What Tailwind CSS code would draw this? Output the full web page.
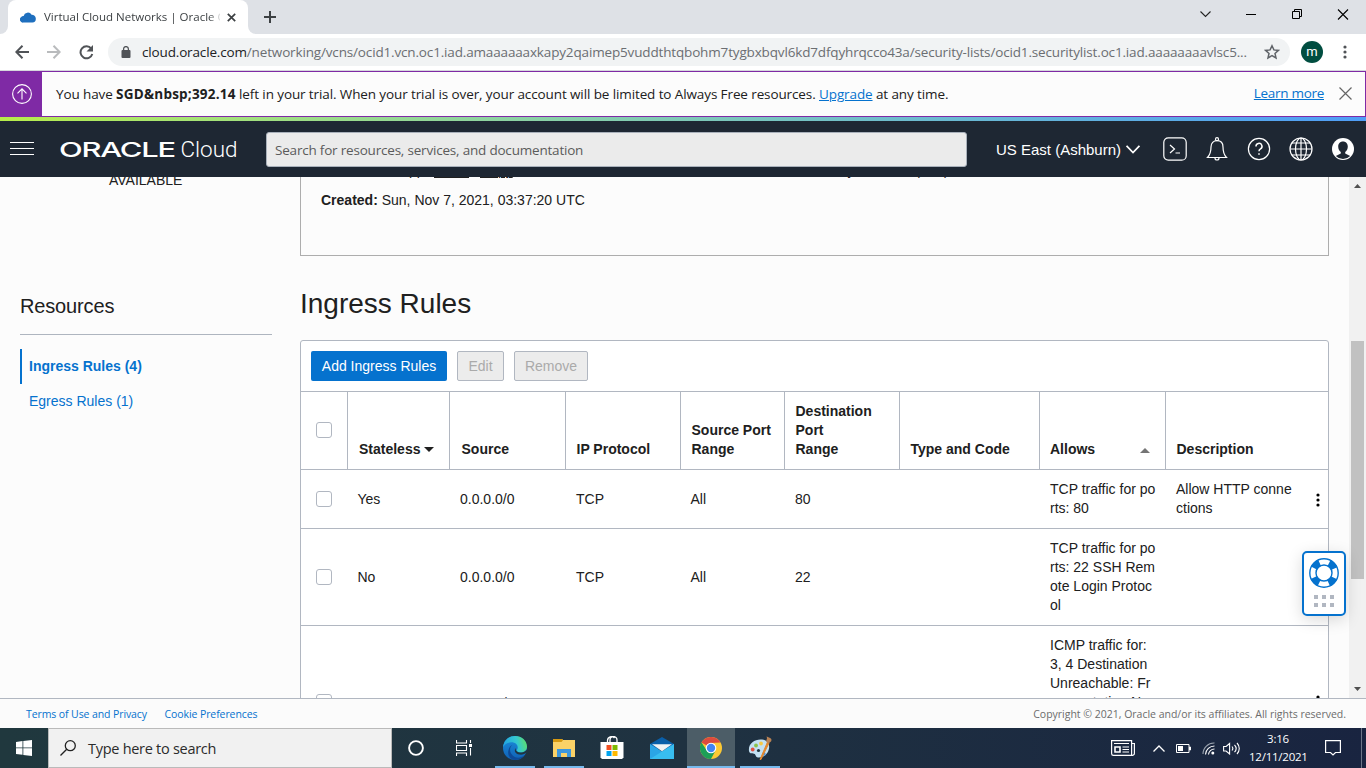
<!DOCTYPE html>
<html lang="en">
<head>
<meta charset="utf-8">
<title>Virtual Cloud Networks | Oracle Cloud</title>
<script src="https://cdn.jsdelivr.net/npm/@tailwindcss/browser@4"></script>
</head>
<body class="w-[1366px] h-[768px] overflow-hidden flex flex-col bg-[#fcfcfc] text-[#202020] font-['Open_Sans','Noto_Sans',sans-serif] whitespace-nowrap">

<!-- tab strip -->
<div class="h-[34px] shrink-0 bg-[#dee1e6] flex items-stretch">
  <div class="w-2 flex bg-white"><div class="w-2 bg-[#dee1e6] rounded-br-lg"></div></div>
  <div class="w-[240px] bg-white rounded-t-lg flex items-center pl-3 pr-[10px]">
    <svg class="w-4 h-[11px] shrink-0" viewBox="0 0 16 11"><path d="M3.3 10.6A3 3 0 0 1 1 5.3 3 3 0 0 1 3.6 4 4.4 4.4 0 0 1 11.6 2.7 4 4 0 0 1 15.8 6.6 3.8 3.8 0 0 1 12.5 10.6Z" fill="#1e6fbe"/></svg>
    <div class="ml-2 w-[176px] overflow-hidden text-[11.5px] leading-4 text-[#3c4043] [mask-image:linear-gradient(90deg,#000_165px,transparent_178px)]">Virtual Cloud Networks | Oracle Clo</div>
    <svg class="w-[9px] h-[9px] ml-[7px] shrink-0" viewBox="0 0 9 9" stroke="#3c4043" stroke-width="1.7"><path d="M.8.8l7.4 7.4M8.2.8L.8 8.2"/></svg>
  </div>
  <div class="w-2 flex bg-white"><div class="w-2 bg-[#dee1e6] rounded-bl-lg"></div></div>
  <svg class="w-3 h-3 ml-2 mt-[11px]" viewBox="0 0 12 12" stroke="#3c4043" stroke-width="2"><path d="M6 0v12M0 6h12"/></svg>
  <div class="ml-auto flex items-start pt-[9px] pr-[18px]">
    <svg class="w-[11px] h-[11px] mr-[35px]" viewBox="0 0 11 11" fill="none" stroke="#222" stroke-width="1.1"><path d="M.5 2.5l5 5 5-5"/></svg>
    <svg class="w-[10px] h-[11px] mr-9" viewBox="0 0 10 11" fill="none" stroke="#000"><path d="M0 5.5h10"/></svg>
    <svg class="w-[10px] h-[11px] mr-9" viewBox="0 0 10 11" fill="none" stroke="#000"><path d="M.5 2.5h7v7h-7zM2.5 2.5v-2h7v7h-2"/></svg>
    <svg class="w-[10px] h-[11px] overflow-visible" viewBox="0 0 10 11" fill="none" stroke="#000" stroke-width="1.1"><path d="M0 .5l10 10M10 .5l-10 10"/></svg>
  </div>
</div>

<!-- address bar -->
<div class="h-[37px] shrink-0 bg-white border-b border-[#d5d8dc] flex items-center">
  <svg class="w-[14px] h-[14px] ml-[15px] shrink-0" viewBox="0 0 14 14" fill="none" stroke="#505357" stroke-width="2"><path d="M14 7H1.5M7.5.8L1.3 7l6.2 6.2"/></svg>
  <svg class="w-[14px] h-[14px] ml-[18px] shrink-0" viewBox="0 0 14 14" fill="none" stroke="#b9bbbd" stroke-width="2"><path d="M0 7h12.5M6.5.8L12.7 7l-6.2 6.2"/></svg>
  <svg class="w-[15px] h-[15px] ml-[18px] shrink-0" viewBox="0 0 15 15"><path d="M12.3 3.6A6 6 0 1 0 13.3 9" fill="none" stroke="#505357" stroke-width="2"/><path d="M14 0v6.5H7.5z" fill="#505357"/></svg>
  <div class="ml-[14px] w-[1182px] h-7 shrink-0 rounded-full bg-[#f1f3f4] flex items-center pl-[13px] pr-[10px]">
    <svg class="w-[10px] h-3 mr-[11px] shrink-0" viewBox="0 0 10 12"><rect x=".5" y="4" width="9" height="8" rx="1" fill="#505357"/><path d="M2.6 4.5V3a2.4 2.4 0 0 1 4.8 0v1.5" fill="none" stroke="#505357" stroke-width="1.3"/></svg>
    <div class="text-[13.5px] tracking-[-0.155px] leading-5 text-[#6b6e72]"><span class="text-[#202124]">cloud.oracle.com</span>/networking/vcns/ocid1.vcn.oc1.iad.amaaaaaaxkapy2qaimep5vuddthtqbohm7tygbxbqvl6kd7dfqyhrqcco43a/security-lists/ocid1.securitylist.oc1.iad.aaaaaaaavlsc5...</div>
    <svg class="w-4 h-4 ml-auto shrink-0" viewBox="0 0 16 16" fill="none" stroke="#5f6368" stroke-width="1.5"><path d="M8 1.8l1.9 4.1 4.5.5-3.4 3 1 4.5L8 11.6l-4 2.3 1-4.5-3.4-3 4.5-.5z"/></svg>
  </div>
  <div class="ml-[11px] w-[22px] h-[22px] shrink-0 rounded-full bg-[#004d40] text-white text-[13px] font-['Roboto',sans-serif] leading-[21px] text-center">m</div>
  <svg class="w-1 h-[14px] ml-[19.5px] shrink-0" viewBox="0 0 4 14" fill="#505357"><circle cx="2" cy="2" r="1.6"/><circle cx="2" cy="7" r="1.6"/><circle cx="2" cy="12" r="1.6"/></svg>
</div>

<!-- trial banner -->
<div class="h-[46px] shrink-0 border border-[#7f2aa5] bg-[#fcfcfc] flex items-center">
  <div class="w-[41px] h-full bg-[#7f2aa5] flex items-center pl-[11px]">
    <svg class="w-5 h-5" viewBox="0 0 20 20" fill="none" stroke="#fff" stroke-width="1.1"><circle cx="10" cy="10" r="9.4"/><path d="M10 15.5V5M5.5 9.3L10 4.8l4.5 4.5"/></svg>
  </div>
  <div class="ml-[14px] text-[13.5px] tracking-[-0.11px] leading-5">You have <b class="tracking-[0.22px]">SGD&amp;nbsp;392.14</b> left in your trial. When your trial is over, your account will be limited to Always Free resources. <a class="text-[#0572ce] underline">Upgrade</a> at any time.</div>
  <a class="ml-auto mr-[15px] text-[13.5px] tracking-[-0.3px] leading-5 text-[#0572ce] underline -mt-[2px]">Learn more</a>
  <svg class="w-[13px] h-[13px] mr-[13px] -mt-[2px]" viewBox="0 0 13 13" stroke="#666" stroke-width="1.2"><path d="M.5.5l12 12M12.5.5l-12 12"/></svg>
</div>
<div class="h-1 shrink-0 bg-linear-to-r from-[#b6ec49] to-[#4f9df7]"></div>

<!-- console header -->
<div class="h-14 shrink-0 bg-[#1e2733] flex items-center text-white">
  <svg class="w-6 h-[14px] ml-[10px]" viewBox="0 0 24 14" stroke="#fff" stroke-width="1"><path d="M0 .5h24M0 6.5h24M0 12.5h24"/></svg>
  <svg class="w-[178px] h-6 ml-[26px]" viewBox="0 0 178 24" fill="#fff"><text x="-1" y="20" font-family="Inter" font-weight="500" font-size="20.5" letter-spacing="-0.8" textLength="116" lengthAdjust="spacingAndGlyphs">ORACLE</text><text x="120.5" y="20" font-family="Roboto" font-weight="300" font-size="22" textLength="57" lengthAdjust="spacingAndGlyphs">Cloud</text></svg>
  <div class="ml-7 w-[701px] h-[35px] rounded-[3px] bg-[#ebebeb] border border-[#a9b1bb] flex items-center pl-2 pt-[2px] text-[13.5px] tracking-[-0.2px] text-[#5b5b5b]">Search for resources, services, and documentation</div>
  <div class="ml-[29px] w-[126px] text-[15px] font-['Liberation_Sans',sans-serif] pt-[2px]">US East (Ashburn)</div>
  <svg class="w-[14px] h-[9px] ml-[4px]" viewBox="0 0 14 9" fill="none" stroke="#fff" stroke-width="1.7"><path d="M.6.8L7 7.5 13.4.8"/></svg>
  <svg class="w-6 h-6 ml-[23px]" viewBox="0 0 24 24" fill="none" stroke="#fff" stroke-width="1.2"><rect x=".8" y=".8" width="22.4" height="22.4" rx="4.5"/><path d="M7 8l4.5 4L7 16M12.5 16H17"/></svg>
  <svg class="w-6 h-6 ml-[18px]" viewBox="0 0 24 24" fill="none" stroke="#fff" stroke-width="1.2"><circle cx="12" cy="2.2" r="1.5"/><path d="M2.5 20.5C4.8 18 6 15.5 6 10c0-4 2.5-6.3 6-6.3S18 6 18 10c0 5.5 1.2 8 3.5 10.5zM10 21a2 2 0 0 0 4 0"/></svg>
  <svg class="w-6 h-6 ml-[18px]" viewBox="0 0 24 24" fill="none" stroke="#fff" stroke-width="1.2"><circle cx="12" cy="12" r="10.6"/><path stroke-width="1.5" d="M9 9.5a3 2.9 0 1 1 4.5 2.3c-1 .6-1.5 1-1.5 2.4M12 16.2v1.6"/></svg>
  <svg class="w-6 h-6 ml-[18px]" viewBox="0 0 24 24" fill="none" stroke="#fff" stroke-width="1.2"><circle cx="12" cy="12" r="11"/><ellipse cx="12" cy="12" rx="5.5" ry="11"/><path d="M12 1v22M1 12h22M3 6h18M3 18h18"/></svg>
  <svg class="w-6 h-6 ml-[18px]" viewBox="0 0 24 24"><circle cx="12" cy="12" r="11" fill="#fff"/><path d="M12 4.5c3 0 4.8 2.2 4.8 5 0 2.5-1 4.4-2.6 5.6v1.4l5 2.5A10 10 0 0 1 12 22a10 10 0 0 1-7.2-3l5-2.5v-1.4C8.2 13.9 7.2 12 7.2 9.5c0-2.8 1.8-5 4.8-5z" fill="#1e2733"/></svg>
</div>

<!-- page -->
<div class="h-[521px] shrink-0 overflow-hidden flex font-['Liberation_Sans',sans-serif] text-[14px] leading-[19px] relative">
  <div class="w-[300px] shrink-0 px-5">
    <div class="mt-[-6px] ml-[89px] h-[19px]">AVAILABLE</div>
    <div class="mt-[102px] h-7 text-[20px] tracking-[-0.15px] leading-7">Resources</div>
    <div class="mt-[14px] w-[252px] h-px bg-[#aeb5bf]"></div>
    <div class="mt-[14px] h-[35px] border-l-2 border-[#0572ce] pl-[7px] leading-[34px] font-bold text-[#0572ce]">Ingress Rules (4)</div>
    <div class="h-[35px] pl-[9px] leading-[34px] text-[#0572ce]">Egress Rules (1)</div>
  </div>
  <div class="w-[1049px] shrink-0">
    <div class="w-[1029px] h-[79px] overflow-hidden border border-t-0 border-[#adadad] px-5">
      <div class="mt-[-15px] h-[19px] flex leading-[17px]"><div class="w-[113px]"><b>OCID:</b> ...uhwxpp</div><div class="w-[46px]"><span class="underline decoration-1 underline-offset-2">Show</span></div><div class="w-[320px]"><span class="underline decoration-1 underline-offset-2">Copy</span></div><div><b>&nbsp;</b>Security: network (root),</div></div>
      <div class="mt-[10px]"><b>Created:</b> Sun, Nov 7, 2021, 03:37:20 UTC</div>
    </div>
    <div class="mt-[30px] h-9 text-[28px] leading-9">Ingress Rules</div>
    <div class="mt-[18px] w-[1029px] border border-[#b1b7c1] bg-white rounded-t-[3px]">
      <div class="h-[51px] border-b border-[#b1b7c1] flex items-center gap-[10px] pl-[10px]">
        <div class="h-[30px] w-[136px] rounded-[2px] bg-[#0572ce] text-white text-center leading-[30px]">Add Ingress Rules</div>
        <div class="h-[30px] w-[47px] rounded-[2px] bg-[#ececec] border border-[#b1b7c1] text-[#aaa] text-center leading-7">Edit</div>
        <div class="h-[30px] w-[74px] rounded-[2px] bg-[#ececec] border border-[#b1b7c1] text-[#aaa] text-center leading-7">Remove</div>
      </div>
      <div class="h-[78px] border-b border-[#b1b7c1] grid grid-cols-[47px_102px_116px_115px_104px_115px_140px_126px_162px] font-bold">
        <div class="border-r border-[#b1b7c1] pl-[15px] pt-[30px]"><div class="w-4 h-4 rounded-[3px] border border-[#b1b7c1]"></div></div>
        <div class="border-r border-[#b1b7c1] pl-[11px] pb-[10px] flex items-end">Stateless<svg class="w-[10px] h-[5px] ml-1 mb-[7px]" viewBox="0 0 10 5"><path d="M0 0h10L5 5z" fill="#202020"/></svg></div>
        <div class="border-r border-[#b1b7c1] pl-[11.5px] pb-[10px] flex items-end">Source</div>
        <div class="border-r border-[#b1b7c1] pl-[10.5px] pb-[10px] flex items-end">IP Protocol</div>
        <div class="border-r border-[#b1b7c1] pl-[10.5px] pb-[10px] flex items-end"><span>Source Port<br>Range</span></div>
        <div class="border-r border-[#b1b7c1] pl-[10.5px] pb-[10px] flex items-end"><span>Destination<br>Port<br>Range</span></div>
        <div class="border-r border-[#b1b7c1] pl-[10.5px] pb-[10px] flex items-end">Type and Code</div>
        <div class="border-r border-[#b1b7c1] pl-[10px] pr-[15px] pb-[10px] flex items-end justify-between">Allows<svg class="w-[10px] h-[5px] mb-[6px]" viewBox="0 0 10 5"><path d="M0 5h10L5 0z" fill="#757575"/></svg></div>
        <div class="pl-[10.5px] pb-[10px] flex items-end">Description</div>
      </div>
      <div class="h-[59px] border-b border-[#b1b7c1] grid items-center grid-cols-[47px_102px_116px_115px_104px_115px_140px_126px_162px]">
        <div class="pl-[15px]"><div class="w-4 h-4 rounded-[3px] border border-[#b1b7c1]"></div></div>
        <div class="pl-[9.5px]">Yes</div><div class="pl-[10px]">0.0.0.0/0</div><div class="pl-[10px]">TCP</div><div class="pl-[9.5px]">All</div><div class="pl-[10px]">80</div><div></div>
        <div class="pl-[10px]">TCP traffic for po<br>rts: 80</div>
        <div class="pl-[10px] pr-[8px] flex items-center justify-between"><span>Allow HTTP conne<br>ctions</span><svg class="w-1 h-[14px] mt-px" viewBox="0 0 4 14"><circle cx="2" cy="2" r="1.6"/><circle cx="2" cy="7" r="1.6"/><circle cx="2" cy="12" r="1.6"/></svg></div>
      </div>
      <div class="h-[97px] border-b border-[#b1b7c1] grid items-center grid-cols-[47px_102px_116px_115px_104px_115px_140px_126px_162px]">
        <div class="pl-[15px]"><div class="w-4 h-4 rounded-[3px] border border-[#b1b7c1]"></div></div>
        <div class="pl-[9.5px]">No</div><div class="pl-[10px]">0.0.0.0/0</div><div class="pl-[10px]">TCP</div><div class="pl-[9.5px]">All</div><div class="pl-[10px]">22</div><div></div>
        <div class="pl-[10px]">TCP traffic for po<br>rts: 22 SSH Rem<br>ote Login Protoc<br>ol</div>
      </div>
      <div class="h-[152px] grid items-center grid-cols-[47px_102px_116px_115px_104px_115px_140px_126px_162px]">
        <div class="pl-[15px]"><div class="w-4 h-4 rounded-[3px] border border-[#b1b7c1]"></div></div>
        <div class="pl-[9.5px] pt-[2px]">No</div><div class="pl-[10px] pt-[2px]">0.0.0.0/0</div><div class="pl-[10px] pt-[2px]">ICMP</div><div></div><div></div><div class="pl-[10px] pt-[2px]">3, 4</div>
        <div class="pl-[10px]">ICMP traffic for:<br>3, 4 Destination<br>Unreachable: Fr<br>agmentation Ne<br>eded and Don't F<br>ragment was Se<br>t</div>
        <div class="pr-[8px] flex justify-end"><svg class="w-1 h-[14px]" viewBox="0 0 4 14"><circle cx="2" cy="2" r="1.6"/><circle cx="2" cy="7" r="1.6"/><circle cx="2" cy="12" r="1.6"/></svg></div>
      </div>
    </div>
  </div>
  <!-- scrollbar -->
  <div class="w-[17px] bg-[#f1f1f1] flex flex-col items-center">
    <svg class="w-[7px] h-1 mt-[7px]" viewBox="0 0 7 4"><path d="M0 4h7L3.5 0z" fill="#505050"/></svg>
    <div class="w-[13px] h-[238px] bg-[#c1c1c1] mt-[153px]"></div>
    <svg class="w-[7px] h-1 mt-auto mb-[7px]" viewBox="0 0 7 4"><path d="M0 0h7L3.5 4z" fill="#505050"/></svg>
  </div>
  <!-- floating help widget -->
  <div class="absolute left-[1302px] top-[374px] w-11 h-[65px] rounded-[5px] border-2 border-[#0572ce] bg-white shadow-[0_4px_16px_rgba(0,0,0,0.15)] flex flex-col items-center pt-[5px]">
    <svg class="w-[30px] h-[30px]" viewBox="0 0 30 30"><circle cx="15" cy="15" r="11" fill="none" stroke="#0572ce" stroke-width="7" stroke-dasharray="7.6 9.679" stroke-dashoffset="-4.84"/><g fill="none" stroke="#0572ce" stroke-width="1.4"><circle cx="15" cy="15" r="14.2"/><circle cx="15" cy="15" r="8"/></g></svg>
    <div class="mt-[7px] grid grid-cols-3 gap-1"><i class="w-1 h-1 bg-[#b1b7c1]"></i><i class="w-1 h-1 bg-[#b1b7c1]"></i><i class="w-1 h-1 bg-[#b1b7c1]"></i><i class="w-1 h-1 bg-[#b1b7c1]"></i><i class="w-1 h-1 bg-[#b1b7c1]"></i><i class="w-1 h-1 bg-[#b1b7c1]"></i></div>
  </div>
</div>

<!-- page footer -->
<div class="h-[30px] shrink-0 border-t border-[#b1b7c1] bg-[#fbfbfb] flex items-center pl-[26px] pr-5 pt-[2px] text-[10.5px]">
  <a class="text-[#0572ce] w-[138.5px] tracking-[-0.1px]">Terms of Use and Privacy</a>
  <a class="text-[#0572ce] tracking-[-0.09px]">Cookie Preferences</a>
  <div class="ml-auto text-[#6b6b6b] tracking-[-0.01px]">Copyright © 2021, Oracle and/or its affiliates. All rights reserved.</div>
</div>

<!-- taskbar -->
<div class="h-10 shrink-0 bg-linear-to-r from-[#20383e] via-[#1f3241] to-[#192440] flex items-stretch text-white">
  <div class="w-12 flex items-center pl-4 pb-[1px]"><svg class="w-4 h-4" viewBox="0 0 16 16" fill="#fff"><path d="M0 2l6.5-.9v6.5H0zM7.3 1L16 0v7.6H7.3zM0 8.3h6.5v6.5L0 14zM7.3 8.3H16V16l-8.7-1z"/></svg></div>
  <div class="w-[344px] bg-[#f1f1f1] border border-[#bababa] flex items-center pl-[11px] text-[#2b2b2b] text-[14.5px] tracking-[-0.28px]">
    <svg class="w-4 h-4 mr-[12px] -mt-px" viewBox="0 0 16 16" fill="none" stroke="#222" stroke-width="1.3"><circle cx="10.3" cy="5.7" r="5"/><path d="M6.7 9.3L.5 15.5"/></svg><span class="pt-[2px]">Type here to search</span>
  </div>
  <div class="w-12 flex items-center justify-center"><svg class="w-4 h-4" viewBox="0 0 16 16" fill="none" stroke="#fff" stroke-width="1.9"><circle cx="8" cy="8" r="6.9"/></svg></div>
  <div class="w-[47px] flex items-center justify-center pl-px"><svg class="w-[17px] h-4" viewBox="0 0 17 16" fill="none" stroke="#fff" stroke-width="1.1"><path d="M.5 0v3h10V0M.5 5.5h10v5H.5zM.5 16v-3h10v3M14.5 0v3M14.5 8v7.5"/><path d="M13 4h3v3h-3z" fill="#fff" stroke="none"/></svg></div>
  <div class="w-[55px] flex flex-col items-center">
    <svg class="w-6 h-6 mt-2" viewBox="0 0 24 24"><defs><linearGradient id="ea" x1="0" x2="1" y1=".3" y2=".1"><stop stop-color="#22a5e0"/><stop offset=".55" stop-color="#35c8d0"/><stop offset="1" stop-color="#62e05c"/></linearGradient><linearGradient id="eb" x1="0" x2="0" y2="1"><stop stop-color="#1b8fdc"/><stop offset="1" stop-color="#1061b5"/></linearGradient></defs><circle cx="12" cy="12" r="12" fill="url(#eb)"/><path d="M.1 11C.8 4.5 5.8 0 12 0c6.8 0 12 4.8 12 10.5 0 3.5-2.7 6-6 6-2.7 0-4.3-.8-4.3-2 0-.8 1-1.3 1-3C14.7 8.5 12 6.3 8.5 6.3 4.5 6.3 1.5 8.3.1 11z" fill="url(#ea)"/><path d="M9.5 8.8c-3 2.3-3.6 7 .2 10.7 3 2.9 7.3 3 11.6.1-2 2.7-5 4.4-9 4.4C7 23.5 4.5 19 5.3 15 5.8 12 7.3 9.8 9.5 8.8z" fill="#0e4a97"/><path d="M24 16.3c-2.2 2-5 2.7-7.7 2.3-3.8-.5-5.6-3.6-3.7-6.6-.2 2.8 1.6 4.5 5.4 4.5 3 0 5-1.5 6-3z" fill="#203540"/></svg>
    <div class="mt-auto w-10 h-[2px] bg-[#76b9ed]"></div>
  </div>
  <div class="w-[43px] flex flex-col items-center">
    <svg class="w-[22px] h-[18px] mt-[11px]" viewBox="0 0 22 18"><path d="M0 0h9l1 1h12v17H0z" fill="#fbd267"/><path d="M0 0h9l1 1.2L8.5 3H0z" fill="#d79a12"/><path d="M4 10h14v8h-4v-4H8v4H4z" fill="#3d97dd"/></svg>
    <div class="mt-auto w-10 h-[2px] bg-[#76b9ed]"></div>
  </div>
  <div class="w-[54px] flex justify-center items-start">
    <svg class="w-6 h-[23px] mt-2" viewBox="0 0 24 23"><path d="M7.5 7V4.5a4 4 0 0 1 7-2.5M10 7V4a3 3 0 0 1 7 0v3" fill="none" stroke="#fff" stroke-width="1.3"/><path d="M.5 6h23v15.5l-1.5 1.5H2L.5 21.5z" fill="#fff"/><path d="M6.5 9h5v5h-5z" fill="#f25022"/><path d="M12.5 9h5v5h-5z" fill="#7fba00"/><path d="M6.5 15h5v5h-5z" fill="#00a4ef"/><path d="M12.5 15h5v5h-5z" fill="#ffb900"/></svg>
  </div>
  <div class="w-12 flex items-start pl-[11px]">
    <svg class="w-6 h-[22px] mt-[9px]" viewBox="0 0 24 22"><path d="M0 7l12-7 12 7v5H0z" fill="#0a5fa9"/><path d="M0 7l12 7.5L24 7v15H0z" fill="#2ba5e6"/><path d="M0 22L24 7v15z" fill="#38bdf0"/><path d="M2 7.3h20l-10 7z" fill="#f0f3f5"/></svg>
  </div>
  <div class="w-12 bg-[#4c5d67] flex flex-col items-center">
    <svg class="w-[22px] h-[22px] mt-[9px]" viewBox="0 0 22 22"><circle cx="11" cy="11" r="11" fill="#fcc934"/><path d="M11 11L1.47 5.5A11 11 0 0 1 20.53 5.5L11 6z" fill="#dd4b3e"/><path d="M1.47 5.5A11 11 0 0 0 11 22l4.5-8.5L6.5 13z" fill="#1d9f57"/><circle cx="11" cy="11" r="5.3" fill="#fff"/><circle cx="11" cy="11" r="4.2" fill="#4285f4"/></svg>
    <div class="mt-auto w-full h-[2px] bg-[#76b9ed]"></div>
  </div>
  <div class="w-[50px] flex flex-col items-center">
    <svg class="w-6 h-6 mt-2" viewBox="0 0 24 24"><path d="M1 15C0 8 6 3.5 12.5 3.5c6 0 9.5 3.5 8.5 9C20 18 15.5 22 10 21.5c-2.5-.3-2-2.5-3.3-3.5C5 17 1.5 18.5 1 15z" fill="#c4e1f2"/><circle cx="4.7" cy="13.5" r="1.9" fill="#e25241"/><circle cx="8" cy="9.5" r="1.9" fill="#8bc34a"/><circle cx="13" cy="7.5" r="1.9" fill="#f6c945"/><circle cx="16" cy="18" r="1.7" fill="#4a90d9"/><circle cx="10.5" cy="14.5" r="1.6" fill="#20353f"/><path d="M12 23.5L19.5 6l1.5 1L13 23.5z" fill="#e2882e" stroke="#e2882e"/><path d="M18.5 6c-1-2.5 1.5-2.5 0-5.5 2.5 1 5 1.5 5 3.5 0 2-2 2-2.5 3.5z" fill="#b98254"/></svg>
    <div class="mt-auto w-10 h-[2px] bg-[#76b9ed]"></div>
  </div>
  <div class="ml-auto flex items-center">
    <svg class="w-6 h-4 mr-[18px]" viewBox="0 0 24 16" fill="none" stroke="#fff" stroke-width="1.2"><path d="M.6.6h20v14.8H2.5a2 2 0 0 1-1.9-2zM20.6 3.5h2.8v10a1.8 1.8 0 0 1-2.8 1.5M3 3.5h15M11.5 7H18M11.5 9.5H18M11.5 12H18"/><path d="M4 7h5v5H4z" stroke-width="1.6"/></svg>
    <svg class="w-3 h-[7px] mr-[11px]" viewBox="0 0 12 7" fill="none" stroke="#fff" stroke-width="1.3"><path d="M.5 6.5L6 1l5.5 5.5"/></svg>
    <svg class="w-[15px] h-[9px] mr-[11px]" viewBox="0 0 15 9"><path d="M.5.5h12.5v8H.5zM13.5 3v3h1V3z" fill="none" stroke="#fff"/><path d="M2 2h5v5H2z" fill="#fff"/></svg>
    <svg class="w-[13px] h-[13px] mr-[8px]" viewBox="0 0 13 13" fill="none" stroke="#fff" stroke-width="1.1"><path stroke="#9aa3ae" d="M1 12A11 11 0 0 1 12.5 1"/><path d="M3.5 12.5A9 9 0 0 1 12.5 4M6.5 12.5A6 6 0 0 1 12.5 7"/><circle cx="10.8" cy="11" r="1.5" fill="#fff" stroke="none"/></svg>
    <svg class="w-[17px] h-[13px] mr-[9px]" viewBox="0 0 17 13" fill="none" stroke="#fff" stroke-width="1.1"><path d="M.6 4.5h2.5l3.5-3v10.5l-3.5-3H.6zM9 4.5c1 1.2 1 2.8 0 4M11.5 2.8c2 2.2 2 5.2 0 7.4M14 1c3 3.2 3 7.8 0 11"/></svg>
    <div class="w-[58px] text-[11.5px] leading-[18px] tracking-[-0.24px] text-center">3:16<br>12/11/2021</div>
    <svg class="w-4 h-4 ml-[18px] mr-[20px]" viewBox="0 0 16 16" fill="none" stroke="#fff" stroke-width="1.2"><path d="M.6.6h14.8v11.9H10.5L8 15l-2.5-2.5H.6z"/></svg>
    <div class="w-[5px] h-10 border-l border-[#6c7688]"></div>
  </div>
</div>
</body>
</html>
